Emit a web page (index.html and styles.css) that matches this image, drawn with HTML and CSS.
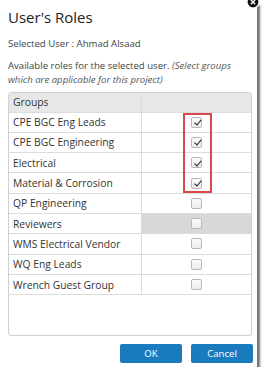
FILE: index.html
```html
<!DOCTYPE html>
<html>
<head>
<meta charset="utf-8">
<link rel="stylesheet" href="styles.css">
</head>
<body>
<div class="dialog">
  <div class="close"><svg width="14" height="14" viewBox="0 0 14 14"><circle cx="7" cy="7" r="6" fill="#111" stroke="#fff" stroke-width="1.2"/><path d="M4.8 4.8 L9.2 9.2 M9.2 4.8 L4.8 9.2" stroke="#fff" stroke-width="1.4"/></svg></div>
  <h1 class="title">User's Roles</h1>
  <p class="selected">Selected User : Ahmad Alsaad</p>
  <p class="info">Available roles for the selected user. <em>(Select groups which are applicable for this project)</em></p>
  <div class="grid">
    <div class="row head"><div class="c1">Groups</div><div class="c2"></div></div>
    <div class="row"><div class="c1">CPE BGC Eng Leads</div><div class="c2"><span class="cb on"></span></div></div>
    <div class="row"><div class="c1">CPE BGC Engineering</div><div class="c2"><span class="cb on"></span></div></div>
    <div class="row"><div class="c1">Electrical</div><div class="c2"><span class="cb on"></span></div></div>
    <div class="row"><div class="c1">Material &amp; Corrosion</div><div class="c2"><span class="cb on"></span></div></div>
    <div class="row"><div class="c1">QP Engineering</div><div class="c2"><span class="cb"></span></div></div>
    <div class="row hl"><div class="c1">Reviewers</div><div class="c2"><span class="cb"></span></div></div>
    <div class="row"><div class="c1">WMS Electrical Vendor</div><div class="c2"><span class="cb"></span></div></div>
    <div class="row"><div class="c1">WQ Eng Leads</div><div class="c2"><span class="cb"></span></div></div>
    <div class="row"><div class="c1">Wrench Guest Group</div><div class="c2"><span class="cb"></span></div></div>
    <div class="redbox"></div>
  </div>
  <div class="actions">
    <button class="btn">OK</button>
    <button class="btn">Cancel</button>
  </div>
</div>
</body>
</html>
```
FILE: styles.css
```css
html, body { margin: 0; padding: 0; background: #fff; }
body { font-family: "Open Sans", "DejaVu Sans", sans-serif; color: #444; }
.dialog {
  position: relative;
  width: 257px;
  height: 367px;
  box-sizing: border-box;
  padding: 6px 5px 0 8px;
  background: #fff;
  box-shadow: 4px 4px 2px -1px rgba(0,0,0,0.55);
}
.close { position: absolute; right: -3px; top: -5px; width: 14px; height: 14px; }
.close svg { display: block; }
.title { margin: 0; font-size: 15px; font-weight: 400; color: #222; line-height: 22px; padding-left: 0; }
.selected { margin: 9px 0 0; font-size: 9.6px; line-height: 14px; color: #444; white-space: nowrap; }
.info { margin: 8px 0 0; font-size: 9.6px; line-height: 14px; color: #444; padding-right: 4px; }
.info em { color: #555; }
.grid {
  position: relative;
  margin-top: 5px;
  height: 244px;
  box-sizing: border-box;
  border: 1px solid #d0d0d0;
  border-radius: 3px;
  width: 244px;
}
.row { display: flex; height: 20.3px; border-bottom: 1px solid #dcdcdc; box-sizing: border-box; font-size: 10.3px; }
.row.head { background: #e7e7e7; height: 19.5px; }
.c1 { width: 133px; border-right: 1px solid #dcdcdc; display: flex; align-items: center; padding-left: 4px; box-sizing: border-box; color: #333; white-space: nowrap; }
.c2 { flex: 1; display: flex; align-items: center; justify-content: center; }
.row.hl .c2 { background: #d8d8d8; }
.cb {
  width: 11px; height: 11px; box-sizing: border-box;
  border: 1px solid #b8b8b8; border-radius: 2px;
  background: linear-gradient(#fbfbfb, #ececec);
  position: relative;
}
.cb.on::after {
  content: ""; position: absolute; left: 3.5px; top: 0.5px;
  width: 2.5px; height: 5.5px;
  border-right: 1.5px solid #222; border-bottom: 1.5px solid #222;
  transform: rotate(40deg);
}
.redbox {
  position: absolute; left: 174px; top: 20px; width: 29px; height: 80px;
  box-sizing: border-box; border: 2px solid #d9484a;
}
.actions { display: flex; justify-content: flex-end; gap: 9px; margin-top: 8px; width: 245px; }
.btn {
  width: 62px; height: 19px; border: none; border-radius: 2px;
  background: #1b7bbf; color: #fff;
  font-family: "Open Sans", sans-serif; font-size: 9.6px; padding: 0;
}
```
